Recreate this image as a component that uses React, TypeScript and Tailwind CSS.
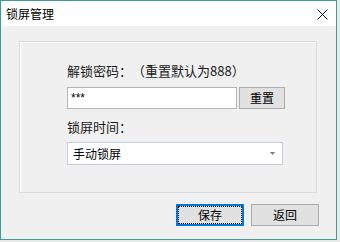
import React from "react";

const cjk = { fontFamily: '"Noto Sans CJK SC", "Microsoft YaHei", sans-serif' };

export default function App() {
  return (
    <div className="w-[340px] h-[242px] bg-[#e9e9e9] [text-spacing-trim:space-all]" style={cjk}>
      <div className="w-[337px] h-[240px] border border-[#3f9b95] bg-[#f0f0f0] flex flex-col">
        <div className="h-[25px] bg-white flex items-center justify-between pl-[5px] pr-[8px]">
          <span className="text-[12px] leading-none text-black">锁屏管理</span>
          <svg width="11" height="11" viewBox="0 0 11 11" className="mt-[1px]">
            <path d="M0.5 0.5 L10.5 10.5 M10.5 0.5 L0.5 10.5" stroke="#111" strokeWidth="1" />
          </svg>
        </div>
        <div className="pt-[15px] pl-[18px]">
          <div className="w-[298px] h-[152px] border border-[#dadada] shadow-[inset_1px_1px_0_#ffffff] pl-[47px] pt-[19px]">
            <div className="text-[13px] leading-[20px] text-[#1a1a1a]">解锁密码：（重置默认为888）</div>
            <div className="flex mt-[6px] gap-[2px]">
              <div className="w-[170px] h-[22px] bg-white border border-[#b5b5b5] flex items-center pl-[3px]">
                <span className="text-[12px] leading-none text-black" style={{ fontFamily: '"Liberation Sans", sans-serif' }}>***</span>
              </div>
              <div className="w-[46px] h-[22px] bg-[#e1e1e1] border border-[#adadad] flex items-center justify-center text-[12px] text-black">重置</div>
            </div>
            <div className="text-[13px] leading-[20px] text-[#1a1a1a] mt-[8px]">锁屏时间：</div>
            <div className="mt-[5px] w-[216px] h-[23px] bg-white border border-[#c5cfdc] flex items-center justify-between pl-[5px] pr-[7px]">
              <span className="text-[12px] leading-none text-black">手动锁屏</span>
              <svg width="5" height="3" viewBox="0 0 5 3" className="mt-[-1px]">
                <path d="M0 0 L5 0 L2.5 3 Z" fill="#7a7a7a" />
              </svg>
            </div>
          </div>
        </div>
        <div className="flex justify-end gap-[7px] pr-[17px] mt-[11px]">
          <div className="w-[68px] h-[22px] bg-[#e1e1e1] border-2 border-[#0078d7] outline outline-1 outline-dotted outline-black outline-offset-[-3px] flex items-center justify-center text-[12px] text-black">保存</div>
          <div className="w-[68px] h-[22px] bg-[#e1e1e1] border border-[#adadad] flex items-center justify-center text-[12px] text-black">返回</div>
        </div>
      </div>
    </div>
  );
}
